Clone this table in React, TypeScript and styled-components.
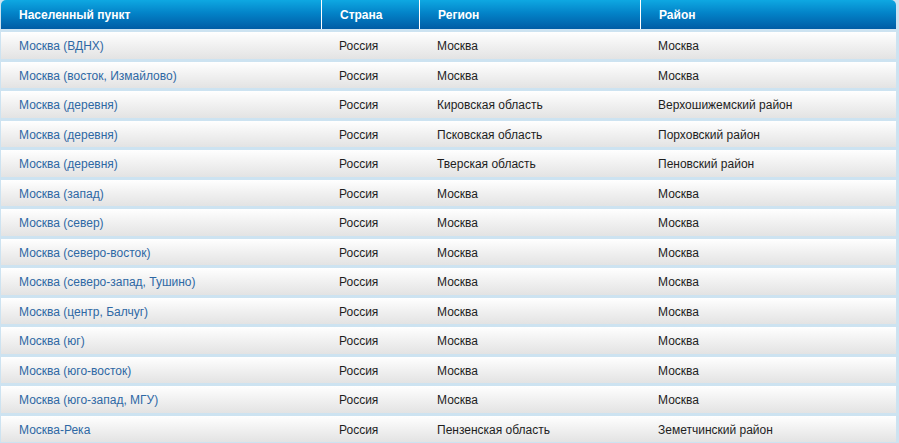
import styled, { createGlobalStyle } from 'styled-components';

const GlobalStyle = createGlobalStyle`
  html, body {
    margin: 0;
    padding: 0;
    background: #ffffff;
  }
`;

type Place = {
  name: string;
  country: string;
  region: string;
  district: string;
};

const places: Place[] = [
  { name: 'Москва (ВДНХ)', country: 'Россия', region: 'Москва', district: 'Москва' },
  { name: 'Москва (восток, Измайлово)', country: 'Россия', region: 'Москва', district: 'Москва' },
  { name: 'Москва (деревня)', country: 'Россия', region: 'Кировская область', district: 'Верхошижемский район' },
  { name: 'Москва (деревня)', country: 'Россия', region: 'Псковская область', district: 'Порховский район' },
  { name: 'Москва (деревня)', country: 'Россия', region: 'Тверская область', district: 'Пеновский район' },
  { name: 'Москва (запад)', country: 'Россия', region: 'Москва', district: 'Москва' },
  { name: 'Москва (север)', country: 'Россия', region: 'Москва', district: 'Москва' },
  { name: 'Москва (северо-восток)', country: 'Россия', region: 'Москва', district: 'Москва' },
  { name: 'Москва (северо-запад, Тушино)', country: 'Россия', region: 'Москва', district: 'Москва' },
  { name: 'Москва (центр, Балчуг)', country: 'Россия', region: 'Москва', district: 'Москва' },
  { name: 'Москва (юг)', country: 'Россия', region: 'Москва', district: 'Москва' },
  { name: 'Москва (юго-восток)', country: 'Россия', region: 'Москва', district: 'Москва' },
  { name: 'Москва (юго-запад, МГУ)', country: 'Россия', region: 'Москва', district: 'Москва' },
  { name: 'Москва-Река', country: 'Россия', region: 'Пензенская область', district: 'Земетчинский район' },
];

export default function App() {
  return (
    <>
      <GlobalStyle />
      <Wrapper>
        {/* шапка таблицы */}
        <HeaderRow>
          <HeadCell>Населенный пункт</HeadCell>
          <HeadCell>Страна</HeadCell>
          <HeadCell>Регион</HeadCell>
          <HeadCell>Район</HeadCell>
        </HeaderRow>
        {places.map((p, i) => (
          <Row key={i}>
            <Cell>
              <PlaceLink href="#">{p.name}</PlaceLink>
            </Cell>
            <Cell>{p.country}</Cell>
            <Cell>{p.region}</Cell>
            <Cell>{p.district}</Cell>
          </Row>
        ))}
      </Wrapper>
    </>
  );
}

const columns = '320px 98px 221px 256px';

const Wrapper = styled.div`
  width: 899px;
  height: 443px;
  box-sizing: border-box;
  padding: 0 3px 0 1px;
  background: #cde3f1;
  display: flex;
  flex-direction: column;
  gap: 3px;
  overflow: hidden;
  font-family: Arial, 'Liberation Sans', sans-serif;
  font-size: 12px;
`;

const HeaderRow = styled.div`
  display: grid;
  grid-template-columns: ${columns};
  height: 29px;
  flex-shrink: 0;
  border-radius: 5px 5px 0 0;
  background: linear-gradient(to bottom, #0ea8e2 0%, #0383c8 45%, #005ca5 100%);
`;

const HeadCell = styled.div`
  display: flex;
  align-items: center;
  padding-left: 18px;
  color: #ffffff;
  font-weight: bold;
  border-left: 1px solid #ffffff;

  &:first-child {
    border-left: none;
  }
`;

const Row = styled.div`
  display: grid;
  grid-template-columns: ${columns};
  height: 26.5px;
  box-sizing: border-box;
  padding-top: 2px;
  flex-shrink: 0;
  background: linear-gradient(to bottom, #ffffff 0%, #f2f2f2 45%, #e3e3e3 100%);
`;

const Cell = styled.div`
  display: flex;
  align-items: center;
  padding-left: 18px;
  color: #1e1e1e;
  white-space: nowrap;
`;

const PlaceLink = styled.a`
  color: #2e68a4;
  text-decoration: none;
`;
